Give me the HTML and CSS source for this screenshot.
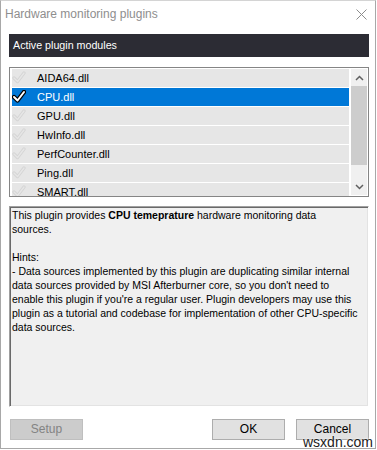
FILE: index.html
```html
<!DOCTYPE html>
<html>
<head>
<meta charset="utf-8">
<link rel="stylesheet" href="styles.css">
</head>
<body>
<div class="window">
  <div class="titlebar">
    <span class="title">Hardware monitoring plugins</span>
    <svg class="close" width="11" height="11" viewBox="0 0 11 11"><path d="M0.5 0.5 L10.5 10.5 M10.5 0.5 L0.5 10.5" stroke="#8c8c8c" stroke-width="1" fill="none"/></svg>
  </div>
  <div class="content">
    <div class="header">Active plugin modules</div>
    <div class="listbox">
      <div class="rows">
        <div class="row"><svg class="chk" width="14" height="13" viewBox="0 0 14 13"><path d="M2 7 L5.5 10.5 L12 2" stroke="#d4d4d4" stroke-width="3.2" fill="none" stroke-linejoin="round" stroke-linecap="round"/><path d="M2 7 L5.5 10.5 L12 2" stroke="#e6e6e6" stroke-width="1.4" fill="none" stroke-linejoin="round" stroke-linecap="round"/></svg><span>AIDA64.dll</span></div>
        <div class="row sel"><svg class="chk" width="14" height="13" viewBox="0 0 14 13"><path d="M2 7 L5.5 10.5 L12 2" stroke="#000" stroke-width="4.4" fill="none" stroke-linejoin="round" stroke-linecap="round"/><path d="M2 7 L5.5 10.5 L12 2" stroke="#fff" stroke-width="2" fill="none" stroke-linejoin="round" stroke-linecap="round"/></svg><span>CPU.dll</span></div>
        <div class="row"><svg class="chk" width="14" height="13" viewBox="0 0 14 13"><path d="M2 7 L5.5 10.5 L12 2" stroke="#d4d4d4" stroke-width="3.2" fill="none" stroke-linejoin="round" stroke-linecap="round"/><path d="M2 7 L5.5 10.5 L12 2" stroke="#e6e6e6" stroke-width="1.4" fill="none" stroke-linejoin="round" stroke-linecap="round"/></svg><span>GPU.dll</span></div>
        <div class="row"><svg class="chk" width="14" height="13" viewBox="0 0 14 13"><path d="M2 7 L5.5 10.5 L12 2" stroke="#d4d4d4" stroke-width="3.2" fill="none" stroke-linejoin="round" stroke-linecap="round"/><path d="M2 7 L5.5 10.5 L12 2" stroke="#e6e6e6" stroke-width="1.4" fill="none" stroke-linejoin="round" stroke-linecap="round"/></svg><span>HwInfo.dll</span></div>
        <div class="row"><svg class="chk" width="14" height="13" viewBox="0 0 14 13"><path d="M2 7 L5.5 10.5 L12 2" stroke="#d4d4d4" stroke-width="3.2" fill="none" stroke-linejoin="round" stroke-linecap="round"/><path d="M2 7 L5.5 10.5 L12 2" stroke="#e6e6e6" stroke-width="1.4" fill="none" stroke-linejoin="round" stroke-linecap="round"/></svg><span>PerfCounter.dll</span></div>
        <div class="row"><svg class="chk" width="14" height="13" viewBox="0 0 14 13"><path d="M2 7 L5.5 10.5 L12 2" stroke="#d4d4d4" stroke-width="3.2" fill="none" stroke-linejoin="round" stroke-linecap="round"/><path d="M2 7 L5.5 10.5 L12 2" stroke="#e6e6e6" stroke-width="1.4" fill="none" stroke-linejoin="round" stroke-linecap="round"/></svg><span>Ping.dll</span></div>
        <div class="row"><svg class="chk" width="14" height="13" viewBox="0 0 14 13"><path d="M2 7 L5.5 10.5 L12 2" stroke="#d4d4d4" stroke-width="3.2" fill="none" stroke-linejoin="round" stroke-linecap="round"/><path d="M2 7 L5.5 10.5 L12 2" stroke="#e6e6e6" stroke-width="1.4" fill="none" stroke-linejoin="round" stroke-linecap="round"/></svg><span>SMART.dll</span></div>
      </div>
      <div class="scrollbar">
        <div class="arrow"><svg width="9" height="6" viewBox="0 0 9 6"><path d="M1 5 L4.5 1.5 L8 5" stroke="#606060" stroke-width="1.5" fill="none"/></svg></div>
        <div class="thumb"></div>
        <div class="track"></div>
        <div class="arrow"><svg width="9" height="6" viewBox="0 0 9 6"><path d="M1 1 L4.5 4.5 L8 1" stroke="#606060" stroke-width="1.5" fill="none"/></svg></div>
      </div>
    </div>
    <div class="desc">
      <p>This plugin provides <b>CPU temeprature</b> hardware monitoring data<br>sources.</p>
      <p class="gap">Hints:<br>- Data sources implemented by this plugin are duplicating similar internal<br>data sources provided by MSI Afterburner core, so you don't need to<br>enable this plugin if you're a regular user. Plugin developers may use this<br>plugin as a tutorial and codebase for implementation of other CPU-specific<br>data sources.</p>
    </div>
    <div class="buttons">
      <div class="btn disabled">Setup</div>
      <div class="spacer"></div>
      <div class="btn">OK</div>
      <div class="btn">Cancel</div>
    </div>
  </div>
  <span class="watermark">wsxdn.com</span>
</div>
</body>
</html>
```
FILE: styles.css
```css
* { box-sizing: border-box; }
html, body { margin: 0; padding: 0; background: #fff; }
.window {
  position: relative;
  width: 376px;
  height: 449px;
  border: 1px solid #a8a8a8;
  border-top-color: #d4d4d4;
  background: #fff;
  font-family: "Liberation Sans", Arial, sans-serif;
}
.titlebar {
  height: 26px;
  display: flex;
  align-items: center;
  justify-content: space-between;
  padding: 0 8px 0 4px;
}
.title { font-size: 12px; color: #8e8e8e; }
.content { padding: 7px 6px 0 8px; }
.header {
  height: 23px;
  background: #2c2c34;
  color: #fff;
  font-size: 10.7px;
  line-height: 23px;
  padding-left: 4px;
}
.listbox {
  margin-top: 10px;
  height: 130px;
  border: 1px solid #858585;
  display: flex;
  padding: 1px 1px 0 2px;
  overflow: hidden;
}
.rows { flex: 1; overflow: hidden; margin-right: 2px; }
.row {
  height: 18px;
  margin-bottom: 1px;
  background: #e6e6e6;
  display: flex;
  align-items: flex-start;
  font-size: 11px;
  line-height: 18px;
  color: #000;
}
.row .chk { margin: 2px 0 0 0; flex: none; }
.row span { margin-left: 11px; }
.row.sel { background: #0078d7; color: #fff; }
.scrollbar {
  width: 16px;
  height: 126px;
  background: #f0f0f0;
  display: flex;
  flex-direction: column;
}
.arrow { height: 17px; display: flex; align-items: center; justify-content: center; }
.thumb { height: 79px; background: #cdcdcd; }
.track { flex: 1; }
.desc {
  margin-top: 9px;
  height: 201px;
  background: #f0f0f0;
  border: 1px solid;
  border-color: #a0a0a0 #ffffff #ffffff #a0a0a0;
  box-shadow: inset 1px 1px 0 #696969, inset -1px -1px 0 #e3e3e3;
  padding: 1px 2px 0 2px;
  font-family: "Liberation Sans", Arial, sans-serif;
  font-size: 10.5px;
  line-height: 14px;
  color: #000;
  white-space: nowrap;
  overflow: hidden;
}
.desc p { margin: 0; }
.desc p.gap { margin-top: 14px; }
.buttons {
  margin-top: 12px;
  display: flex;
  padding-left: 1px;
  gap: 11px;
}
.spacer { flex: 1; }
.btn {
  width: 73px;
  height: 21px;
  background: #e1e1e1;
  border: 1px solid #adadad;
  font-size: 12px;
  line-height: 19px;
  text-align: center;
  color: #000;
}
.btn.disabled { background: #cccccc; border-color: #bfbfbf; color: #838383; }
.watermark {
  position: absolute;
  left: 302px;
  top: 433px;
  font-family: "Liberation Sans", Arial, sans-serif;
  font-size: 14px;
  color: #222;
  text-shadow: 0 0 2px #fff, 0 0 2px #fff;
}
```
